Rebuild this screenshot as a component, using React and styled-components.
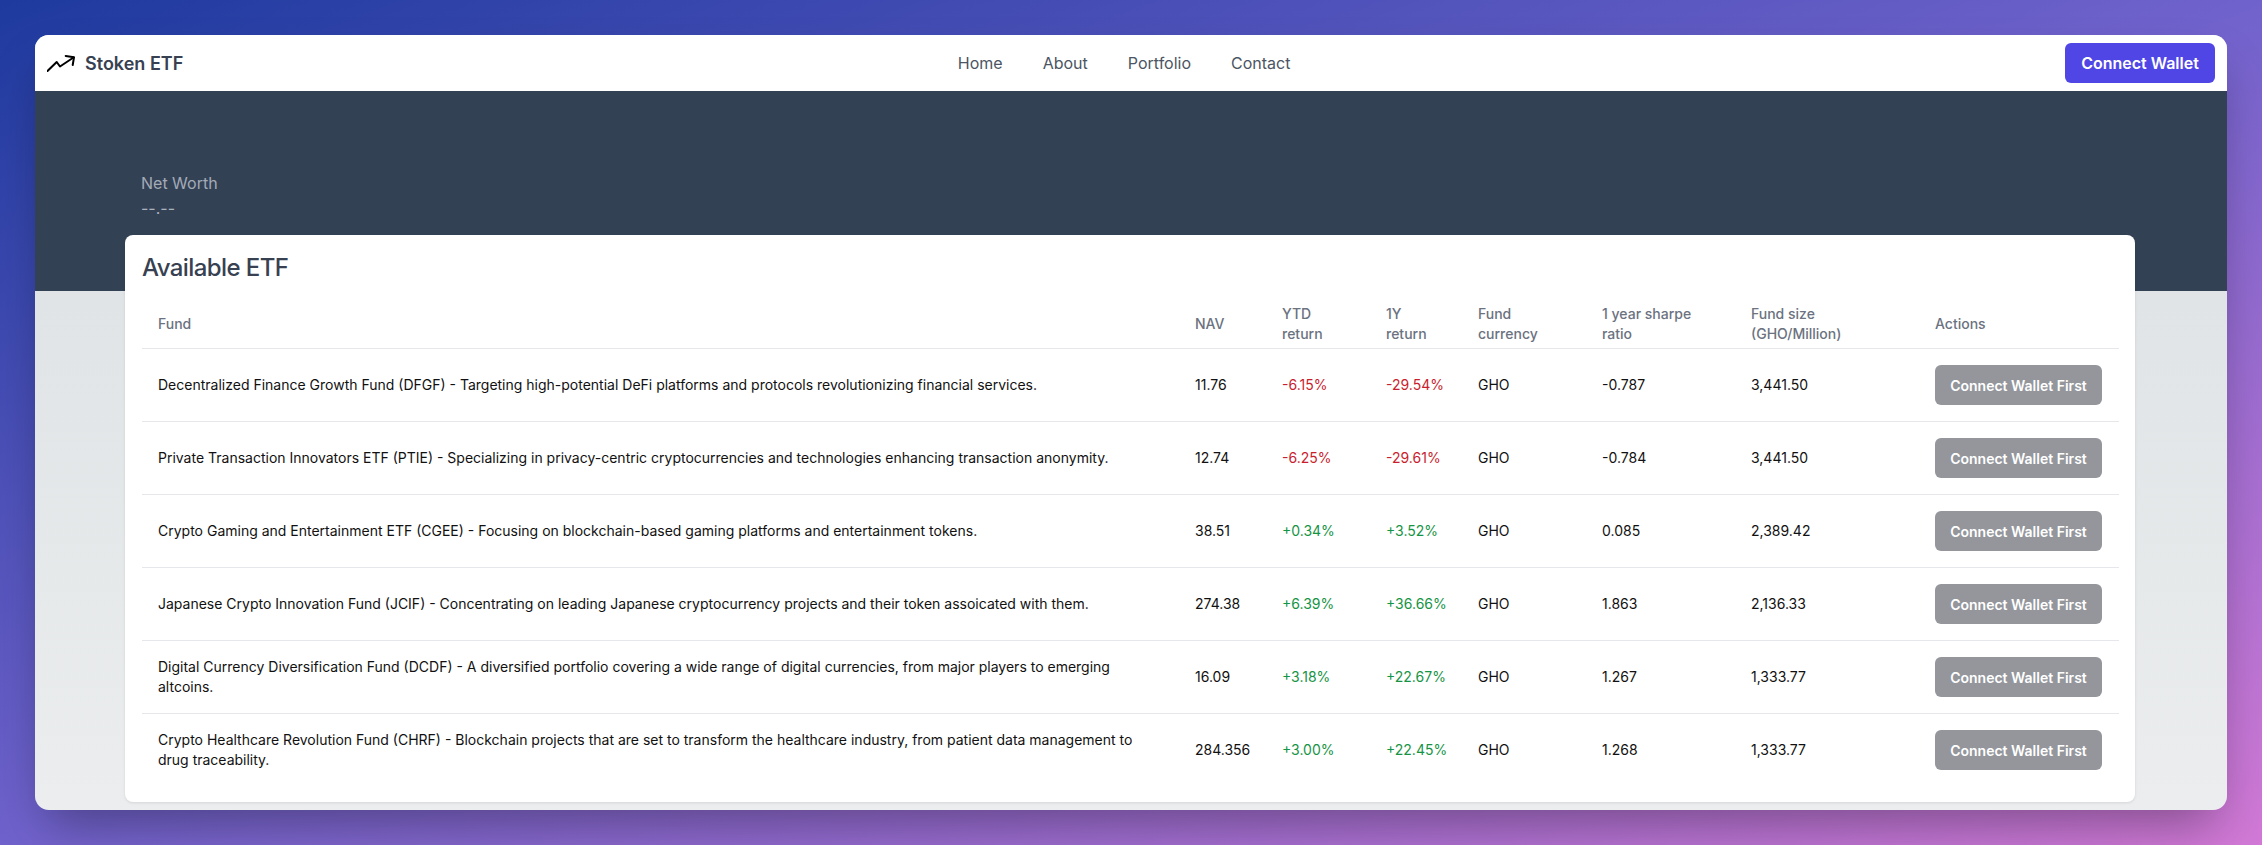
import React from "react";
import styled, { createGlobalStyle } from "styled-components";

const funds = [
  { text: "Decentralized Finance Growth Fund (DFGF) - Targeting high-potential DeFi platforms and protocols revolutionizing financial services.", nav: "11.76", ytd: "-6.15%", year: "-29.54%", sharpe: "-0.787", size: "3,441.50" },
  { text: "Private Transaction Innovators ETF (PTIE) - Specializing in privacy-centric cryptocurrencies and technologies enhancing transaction anonymity.", nav: "12.74", ytd: "-6.25%", year: "-29.61%", sharpe: "-0.784", size: "3,441.50" },
  { text: "Crypto Gaming and Entertainment ETF (CGEE) - Focusing on blockchain-based gaming platforms and entertainment tokens.", nav: "38.51", ytd: "+0.34%", year: "+3.52%", sharpe: "0.085", size: "2,389.42" },
  { text: "Japanese Crypto Innovation Fund (JCIF) - Concentrating on leading Japanese cryptocurrency projects and their token assoicated with them.", nav: "274.38", ytd: "+6.39%", year: "+36.66%", sharpe: "1.863", size: "2,136.33" },
  { text: "Digital Currency Diversification Fund (DCDF) - A diversified portfolio covering a wide range of digital currencies, from major players to emerging altcoins.", nav: "16.09", ytd: "+3.18%", year: "+22.67%", sharpe: "1.267", size: "1,333.77" },
  { text: "Crypto Healthcare Revolution Fund (CHRF) - Blockchain projects that are set to transform the healthcare industry, from patient data management to drug traceability.", nav: "284.356", ytd: "+3.00%", year: "+22.45%", sharpe: "1.268", size: "1,333.77" },
];

const columnWidths = [1037, 87, 104, 92, 124, 149, 184, 200];

const GlobalStyle = createGlobalStyle`
  * { box-sizing: border-box; }
  html, body { margin: 0; height: 100%; }
  body {
    font-family: Inter, "Liberation Sans", sans-serif;
    background: linear-gradient(to bottom right, #1e3a9f 0%, #7062cc 50%, #d279d6 100%);
    overflow: hidden;
  }
`;

const Screen = styled.div`
  width: 2262px;
  height: 845px;
  padding: 35px;
`;

const Window = styled.div`
  height: 775px;
  border-radius: 14px;
  overflow: hidden;
  background: linear-gradient(to bottom, #dfe3e5 200px, #ebedee 100%);
  box-shadow: 0 25px 50px -12px rgba(0, 0, 0, 0.35);
  display: flex;
  flex-direction: column;
`;

const Header = styled.header`
  height: 56px;
  flex-shrink: 0;
  background: #fff;
  display: flex;
  justify-content: space-between;
  align-items: center;
  padding: 0 12px;
`;

const Brand = styled.div`
  display: flex;
  align-items: center;
  gap: 10px;
  font-size: 18px;
  font-weight: 600;
  color: #374151;
`;

const Nav = styled.nav`
  display: flex;
  gap: 40px;
`;

const NavLink = styled.a`
  font-size: 16px;
  color: #4b5563;
`;

const Button = styled.button`
  border: 0;
  height: 40px;
  padding: 0;
  border-radius: 6px;
  font-family: inherit;
  font-weight: 600;
  color: #fff;
  white-space: nowrap;
  width: ${(p) => (p.$muted ? "167px" : "150px")};
  font-size: ${(p) => (p.$muted ? "14px" : "16px")};
  background: ${(p) => (p.$muted ? "#94969c" : "#4f46e5")};
`;

const Hero = styled.section`
  height: 200px;
  flex-shrink: 0;
  background: #334155;
  padding: 80px 106px 0;
`;

const NetLabel = styled.div`
  font-size: 16px;
  line-height: 24px;
  margin-bottom: 1px;
  color: #a3abb7;
`;

const NetValue = styled.div`
  font-size: 16px;
  line-height: 24px;
  color: #aab2bd;
`;

const Card = styled.main`
  margin: -56px 92px 0 90px;
  height: 567px;
  position: relative;
  background: #fff;
  border-radius: 8px;
  padding: 17px;
  box-shadow: 0 1px 3px rgba(0, 0, 0, 0.1);
`;

const Title = styled.h2`
  margin: 0 0 20px;
  font-size: 24px;
  line-height: 32px;
  font-weight: 500;
  letter-spacing: -0.025em;
  color: #374151;
`;

const Table = styled.table`
  width: 1977px;
  table-layout: fixed;
  border-collapse: collapse;
  font-size: 14px;
  line-height: 20px;
`;

const HeadCell = styled.th`
  padding: 0 16px 4px;
  height: 44px;
  text-align: left;
  vertical-align: middle;
  font-weight: 500;
  color: #6b7280;
`;

const Row = styled.tr`
  height: 73px;
  border-top: 1px solid #e5e7eb;
`;

const Cell = styled.td`
  padding: 0 16px;
  vertical-align: middle;
  color: ${(p) => p.$color || "#111"};
`;

const ActionCell = styled(Cell)`
  padding-right: 0;
`;

const TrendIcon = () => (
  <svg width="28" height="28" viewBox="0 0 28 28" fill="none" stroke="#000" strokeWidth="2" strokeLinecap="round" strokeLinejoin="round">
    <path d="M0.5 22 L9.7 13 L13 17.5 L26.5 8.5" />
    <path d="M18.7 7 L27 8.3 L25.7 16" />
  </svg>
);

const returnColor = (value) => (value.startsWith("-") ? "#c81e2e" : "#169445");

export default function App() {
  return (
    <Screen>
      <GlobalStyle />
      <Window>
        <Header>
          <Brand>
            <TrendIcon />
            Stoken ETF
          </Brand>
          <Nav>
            <NavLink>Home</NavLink>
            <NavLink>About</NavLink>
            <NavLink>Portfolio</NavLink>
            <NavLink>Contact</NavLink>
          </Nav>
          <Button>Connect Wallet</Button>
        </Header>
        <Hero>
          <NetLabel>Net Worth</NetLabel>
          <NetValue>--.--</NetValue>
        </Hero>
        <Card>
          <Title>Available ETF</Title>
          <Table>
            <colgroup>
              {columnWidths.map((width, i) => (
                <col key={i} style={{ width }} />
              ))}
            </colgroup>
            <thead>
              <tr>
                <HeadCell>Fund</HeadCell>
                <HeadCell>NAV</HeadCell>
                <HeadCell>YTD<br />return</HeadCell>
                <HeadCell>1Y<br />return</HeadCell>
                <HeadCell>Fund<br />currency</HeadCell>
                <HeadCell>1 year sharpe<br />ratio</HeadCell>
                <HeadCell>Fund size<br />(GHO/Million)</HeadCell>
                <HeadCell>Actions</HeadCell>
              </tr>
            </thead>
            <tbody>
              {funds.map((fund) => (
                <Row key={fund.nav}>
                  <Cell>{fund.text}</Cell>
                  <Cell>{fund.nav}</Cell>
                  <Cell $color={returnColor(fund.ytd)}>{fund.ytd}</Cell>
                  <Cell $color={returnColor(fund.year)}>{fund.year}</Cell>
                  <Cell>GHO</Cell>
                  <Cell>{fund.sharpe}</Cell>
                  <Cell>{fund.size}</Cell>
                  <ActionCell><Button $muted>Connect Wallet First</Button></ActionCell>
                </Row>
              ))}
            </tbody>
          </Table>
        </Card>
      </Window>
    </Screen>
  );
}
